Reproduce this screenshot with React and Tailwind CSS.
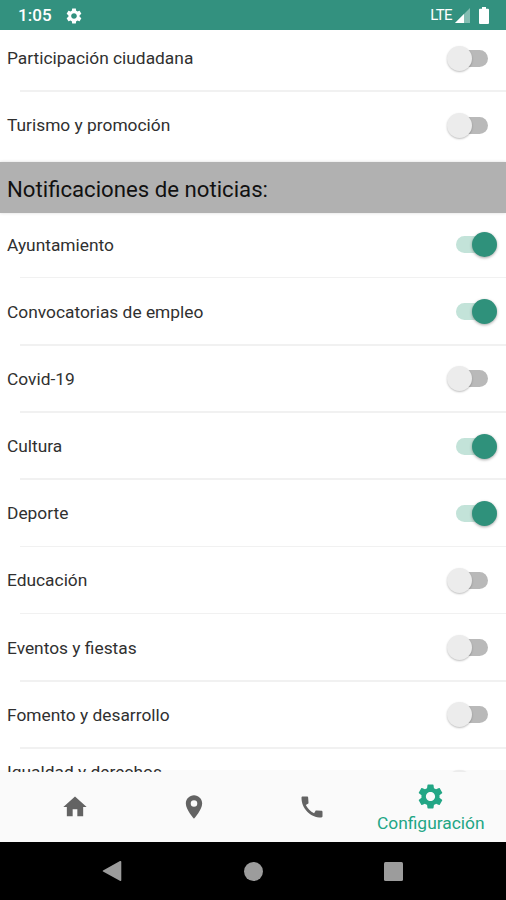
import { useState } from 'react';

const GEAR_PATH =
  'M19.43 12.98c.04-.32.07-.64.07-.98s-.03-.66-.07-.98l2.11-1.65c.19-.15.24-.42.12-.64l-2-3.46c-.12-.22-.39-.3-.61-.22l-2.49 1c-.52-.4-1.08-.73-1.69-.98l-.38-2.65C14.46 2.18 14.25 2 14 2h-4c-.25 0-.46.18-.49.42l-.38 2.65c-.61.25-1.17.59-1.69.98l-2.49-1c-.23-.09-.49 0-.61.22l-2 3.46c-.13.22-.07.49.12.64l2.11 1.65c-.04.32-.07.65-.07.98s.03.66.07.98l-2.11 1.65c-.19.15-.24.42-.12.64l2 3.46c.12.22.39.3.61.22l2.49-1c.52.4 1.08.73 1.69.98l.38 2.65c.03.24.24.42.49.42h4c.25 0 .46-.18.49-.42l.38-2.65c.61-.25 1.17-.59 1.69-.98l2.49 1c.23.09.49 0 .61-.22l2-3.46c.12-.22.07-.49-.12-.64l-2.11-1.65zM12 15.8c-2.1 0-3.8-1.7-3.8-3.8s1.7-3.8 3.8-3.8 3.8 1.7 3.8 3.8-1.7 3.8-3.8 3.8z';

const tabs = [
  { id: 'home', path: 'M10 20v-6h4v6h5v-8h3L12 3 2 12h3v8z' },
  {
    id: 'map',
    path: 'M12 2C8.13 2 5 5.13 5 9c0 5.25 7 13 7 13s7-7.75 7-13c0-3.87-3.13-7-7-7zm0 9.8a2.8 2.8 0 1 1 0-5.6 2.8 2.8 0 0 1 0 5.6z',
  },
  {
    id: 'call',
    path: 'M3 4c0-.6.4-1 1-1h3.800c.5 0 .9.4.9.9l.3 4.200-.1.8-2.200 1.300c1.600 3.200 3.900 5.500 7.100 7.100l1.400-2.200.8-.1 4.100.3c.5 0 .9.4.9.9V20c0 .6-.4 1-1 1C10.600 21 3 13.400 3 4z',
  },
  { id: 'settings', path: GEAR_PATH, label: 'Configuración' },
];

const events = [
  { name: 'Participación ciudadana', on: false },
  { name: 'Turismo y promoción', on: false },
];

const news = [
  { name: 'Ayuntamiento', on: true },
  { name: 'Convocatorias de empleo', on: true },
  { name: 'Covid-19', on: false },
  { name: 'Cultura', on: true },
  { name: 'Deporte', on: true },
  { name: 'Educación', on: false },
  { name: 'Eventos y fiestas', on: false },
  { name: 'Fomento y desarrollo', on: false },
  { name: 'Igualdad y derechos', on: false, tall: true },
];

const Icon = ({ path, className }) => (
  <svg viewBox="0 0 24 24" fill="currentColor" className={className}>
    <path d={path} />
  </svg>
);

const StatusBar = () => (
  <div className="flex h-[30px] shrink-0 items-center bg-[#33917f] pt-px pr-[17px] pl-[18px] text-white">
    <span className="w-[47px] text-[17px] leading-none font-medium tracking-[0.1px]">1:05</span>
    <Icon path={GEAR_PATH} className="h-[18px] w-[18px]" />
    <span className="ml-auto text-[15px] leading-none tracking-[-0.6px]">LTE</span>
    <svg viewBox="0 0 15 15" className="ml-[3px] h-[15px] w-[15px]">
      <path d="M15 0v15H0z" fill="#fff" fillOpacity="0.4" />
      <path d="M9 6v9H0z" fill="#fff" />
    </svg>
    <svg viewBox="0 0 10 17" className="ml-[9px] h-[17px] w-[10px]">
      <path d="M3 0h4v1.7h2a1 1 0 0 1 1 1V16a1 1 0 0 1-1 1H1a1 1 0 0 1-1-1V2.700a1 1 0 0 1 1-1h2z" fill="#fff" />
    </svg>
  </div>
);

const Toggle = ({ on, onClick }) => {
  if (on) {
    return (
      <button onClick={onClick} className="mr-[9.5px] flex items-center pt-px">
        <span className="-mr-4 h-[17px] w-8 rounded-full bg-[#c3e3d9]"></span>
        <span className="h-[25px] w-[25px] rounded-full bg-[#2f917b] shadow-[0_1px_3px_rgba(0,0,0,0.35)]"></span>
      </button>
    );
  }
  return (
    <button onClick={onClick} className="mr-[18.5px] flex items-center pt-px">
      <span className="z-10 h-[25px] w-[25px] rounded-full bg-[#ececec] shadow-[0_1px_2px_rgba(0,0,0,0.25)]"></span>
      <span className="-ml-4 h-[17px] w-8 rounded-full bg-[#b9b9b9]"></span>
    </button>
  );
};

const ToggleList = ({ initial, className }) => {
  const [items, setItems] = useState(initial);

  const toggle = (index) => {
    setItems(items.map((item, i) => (i === index ? { ...item, on: !item.on } : item)));
  };

  return (
    <div className={className}>
      {items.map((item, index) => (
        <div key={item.name}>
          <div className="flex h-[65.7px] items-center justify-between pl-[7px]">
            <span className={`pt-px text-[17.35px] leading-5 text-[#303030] ${item.tall ? 'h-[42px]' : ''}`}>
              {item.name}
            </span>
            <Toggle on={item.on} onClick={() => toggle(index)} />
          </div>
          {index < items.length - 1 && <div className="ml-5 h-[1.5px] bg-[#f1f1f1]"></div>}
        </div>
      ))}
    </div>
  );
};

const BottomTabs = () => {
  const [active, setActive] = useState('settings');

  return (
    <div className="flex h-[70px] shrink-0 bg-[#fafafa] px-4 pb-px">
      {tabs.map((tab) => (
        <button
          key={tab.id}
          onClick={() => setActive(tab.id)}
          className={`flex flex-1 flex-col items-center justify-center ${
            active === tab.id ? 'text-[#22a685]' : 'text-[#636363]'
          }`}
        >
          <Icon path={tab.path} className={tab.label ? 'mt-1 h-[29px] w-[29px]' : 'h-7 w-7'} />
          {tab.label && <span className="text-[17.4px] leading-6">{tab.label}</span>}
        </button>
      ))}
    </div>
  );
};

const SystemNav = () => (
  <div className="flex h-[58px] shrink-0 items-center bg-black pl-[102px] text-[#9c9c9c]">
    <svg viewBox="0 0 20 22" fill="currentColor" className="h-[22px] w-5">
      <path d="M18.500 1c.5 0 .8.3.8.800v18.400c0 .6-.5 1-1 .7L1 11.600c-.4-.2-.4-.9 0-1.100L18 1.100z" />
    </svg>
    <span className="ml-[122px] h-[19px] w-[19px] rounded-full bg-current"></span>
    <span className="ml-[121px] h-[19px] w-[19px] rounded-[1.5px] bg-current"></span>
  </div>
);

const App = () => {
  return (
    <div className="flex h-[900px] w-[506px] flex-col overflow-hidden bg-white font-['Roboto',sans-serif]">
      <StatusBar />
      <div className="min-h-0 flex-1 overflow-hidden bg-[linear-gradient(to_top,#fafafa_2px,#fff_2px)]">
        <ToggleList initial={events} className="-mt-[5.3px] h-[137.3px]" />
        <div className="flex h-[51px] items-center bg-[#b1b1b1] pt-1 pl-[7px] shadow-[0_0_3px_rgba(0,0,0,0.15)]">
          <h2 className="text-[22.2px] leading-none text-[#111]">Notificaciones de noticias:</h2>
        </div>
        <ToggleList initial={news} className="-mt-[1.8px]" />
      </div>
      <BottomTabs />
      <SystemNav />
    </div>
  );
};

export default App;
